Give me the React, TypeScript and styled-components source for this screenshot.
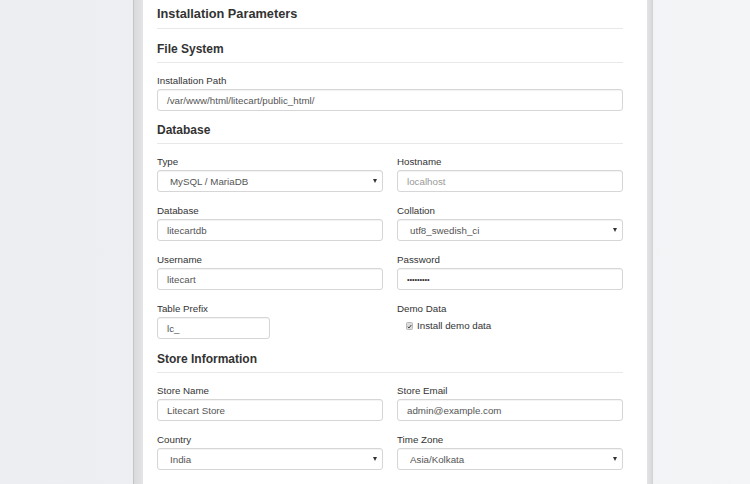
import React from "react";
import styled, { createGlobalStyle } from "styled-components";

const GlobalStyle = createGlobalStyle`
  html, body {
    margin: 0;
    padding: 0;
    height: 100%;
  }
  body {
    font-family: "Liberation Sans", Arial, sans-serif;
    background: linear-gradient(to right, #eceef1 0%, #eef0f3 60%, #f4f5f7 100%);
    overflow: hidden;
  }
`;

const Page = styled.div`
  display: flex;
  min-height: 484px;
  padding-left: 133px;
`;

const Frame = styled.div`
  display: flex;
  width: 520px;
  box-sizing: border-box;
  border-left: 1px solid #c4c5c7;
  border-right: 1px solid #d2d3d5;
  padding: 0 5px 0 9px;
  background: linear-gradient(
    to right,
    #d9dadc 0px,
    #e3e4e6 9px,
    #ffffff 9px,
    #ffffff calc(100% - 6px),
    #e4e5e7 calc(100% - 6px),
    #d8d9db 100%
  );
`;

const Card = styled.div`
  flex: 1;
  background: #ffffff;
  padding: 7px 24px 0 14px;
  min-height: 484px;
  box-sizing: border-box;
`;

const Title = styled.h1`
  margin: 0 0 13px;
  font-size: 12.75px;
  line-height: 14px;
  font-weight: bold;
  color: #333333;
  padding-bottom: 7px;
  border-bottom: 1px solid #e8e8e8;
`;

const SectionHeading = styled.h2<{ $first?: boolean }>`
  margin: ${(p) => (p.$first ? "0" : "1px")} 0 11px;
  font-size: 12px;
  line-height: 14px;
  font-weight: bold;
  color: #333333;
  padding-bottom: 6px;
  border-bottom: 1px solid #e8e8e8;
`;

const Grid = styled.div`
  display: grid;
  grid-template-columns: 1fr 1fr;
  column-gap: 14px;
`;

const Field = styled.div`
  display: flex;
  flex-direction: column;
  margin-bottom: 12px;
`;

const Label = styled.label`
  font-size: 9.75px;
  line-height: 14px;
  color: #333333;
  margin-bottom: 1px;
`;

const InputBox = styled.div<{ $width?: number; $muted?: boolean; $select?: boolean }>`
  display: flex;
  align-items: center;
  justify-content: space-between;
  box-sizing: border-box;
  height: 22px;
  width: ${(p) => (p.$width ? `${p.$width}px` : "100%")};
  border: 1px solid #d6d6d6;
  border-radius: 3px;
  box-shadow: inset 0 1px 1px rgba(0, 0, 0, 0.05);
  background: #ffffff;
  padding: 0 4px 0 ${(p) => (p.$select ? "12px" : "9px")};
  font-size: 9.75px;
  color: ${(p) => (p.$muted ? "#9a9a9a" : "#555555")};
  white-space: nowrap;
  overflow: hidden;
`;

const Arrow = styled.span`
  width: 0;
  height: 0;
  border-left: 2.5px solid transparent;
  border-right: 2.5px solid transparent;
  border-top: 4px solid #333333;
  margin-right: 1px;
`;

const Dots = styled.span`
  font-size: 7.4px;
  color: #333333;
  letter-spacing: -0.1px;
`;

const CheckRow = styled.div`
  display: flex;
  align-items: center;
  gap: 4px;
  padding: 2px 0 0 9px;
  font-size: 9.75px;
  line-height: 14px;
  color: #333333;
`;

const CheckBox = styled.span`
  display: inline-flex;
  align-items: center;
  justify-content: center;
  width: 7px;
  height: 8px;
  box-sizing: border-box;
  border: 1px solid #b9b9b9;
  border-radius: 1.5px;
  background: #dcdcdc;
`;

function TextInput({ value, muted, width }: { value: string; muted?: boolean; width?: number }) {
  return (
    <InputBox $muted={muted} $width={width}>
      {value}
    </InputBox>
  );
}

function Select({ value }: { value: string }) {
  return (
    <InputBox $select>
      <span>{value}</span>
      <Arrow />
    </InputBox>
  );
}

export default function App() {
  return (
    <>
      <GlobalStyle />
      <Page>
        <Frame>
          <Card>
            <Title>Installation Parameters</Title>

            <SectionHeading $first>File System</SectionHeading>
            <Field>
              <Label>Installation Path</Label>
              <TextInput value="/var/www/html/litecart/public_html/" />
            </Field>

            <SectionHeading>Database</SectionHeading>
            <Grid>
              <Field>
                <Label>Type</Label>
                <Select value="MySQL / MariaDB" />
              </Field>
              <Field>
                <Label>Hostname</Label>
                <TextInput value="localhost" muted />
              </Field>
              <Field>
                <Label>Database</Label>
                <TextInput value="litecartdb" />
              </Field>
              <Field>
                <Label>Collation</Label>
                <Select value="utf8_swedish_ci" />
              </Field>
              <Field>
                <Label>Username</Label>
                <TextInput value="litecart" />
              </Field>
              <Field>
                <Label>Password</Label>
                <InputBox>
                  <Dots>•••••••••</Dots>
                </InputBox>
              </Field>
              <Field>
                <Label>Table Prefix</Label>
                <TextInput value="lc_" width={113} />
              </Field>
              <Field>
                <Label>Demo Data</Label>
                <CheckRow>
                  <CheckBox>
                    <svg width="5" height="5" viewBox="0 0 10 10">
                      <path d="M1.5 5.5 L4 8 L8.5 2" fill="none" stroke="#444" strokeWidth="2" />
                    </svg>
                  </CheckBox>
                  Install demo data
                </CheckRow>
              </Field>
            </Grid>

            <SectionHeading>Store Information</SectionHeading>
            <Grid>
              <Field>
                <Label>Store Name</Label>
                <TextInput value="Litecart Store" />
              </Field>
              <Field>
                <Label>Store Email</Label>
                <TextInput value="admin@example.com" />
              </Field>
              <Field>
                <Label>Country</Label>
                <Select value="India" />
              </Field>
              <Field>
                <Label>Time Zone</Label>
                <Select value="Asia/Kolkata" />
              </Field>
            </Grid>
          </Card>
        </Frame>
      </Page>
    </>
  );
}
